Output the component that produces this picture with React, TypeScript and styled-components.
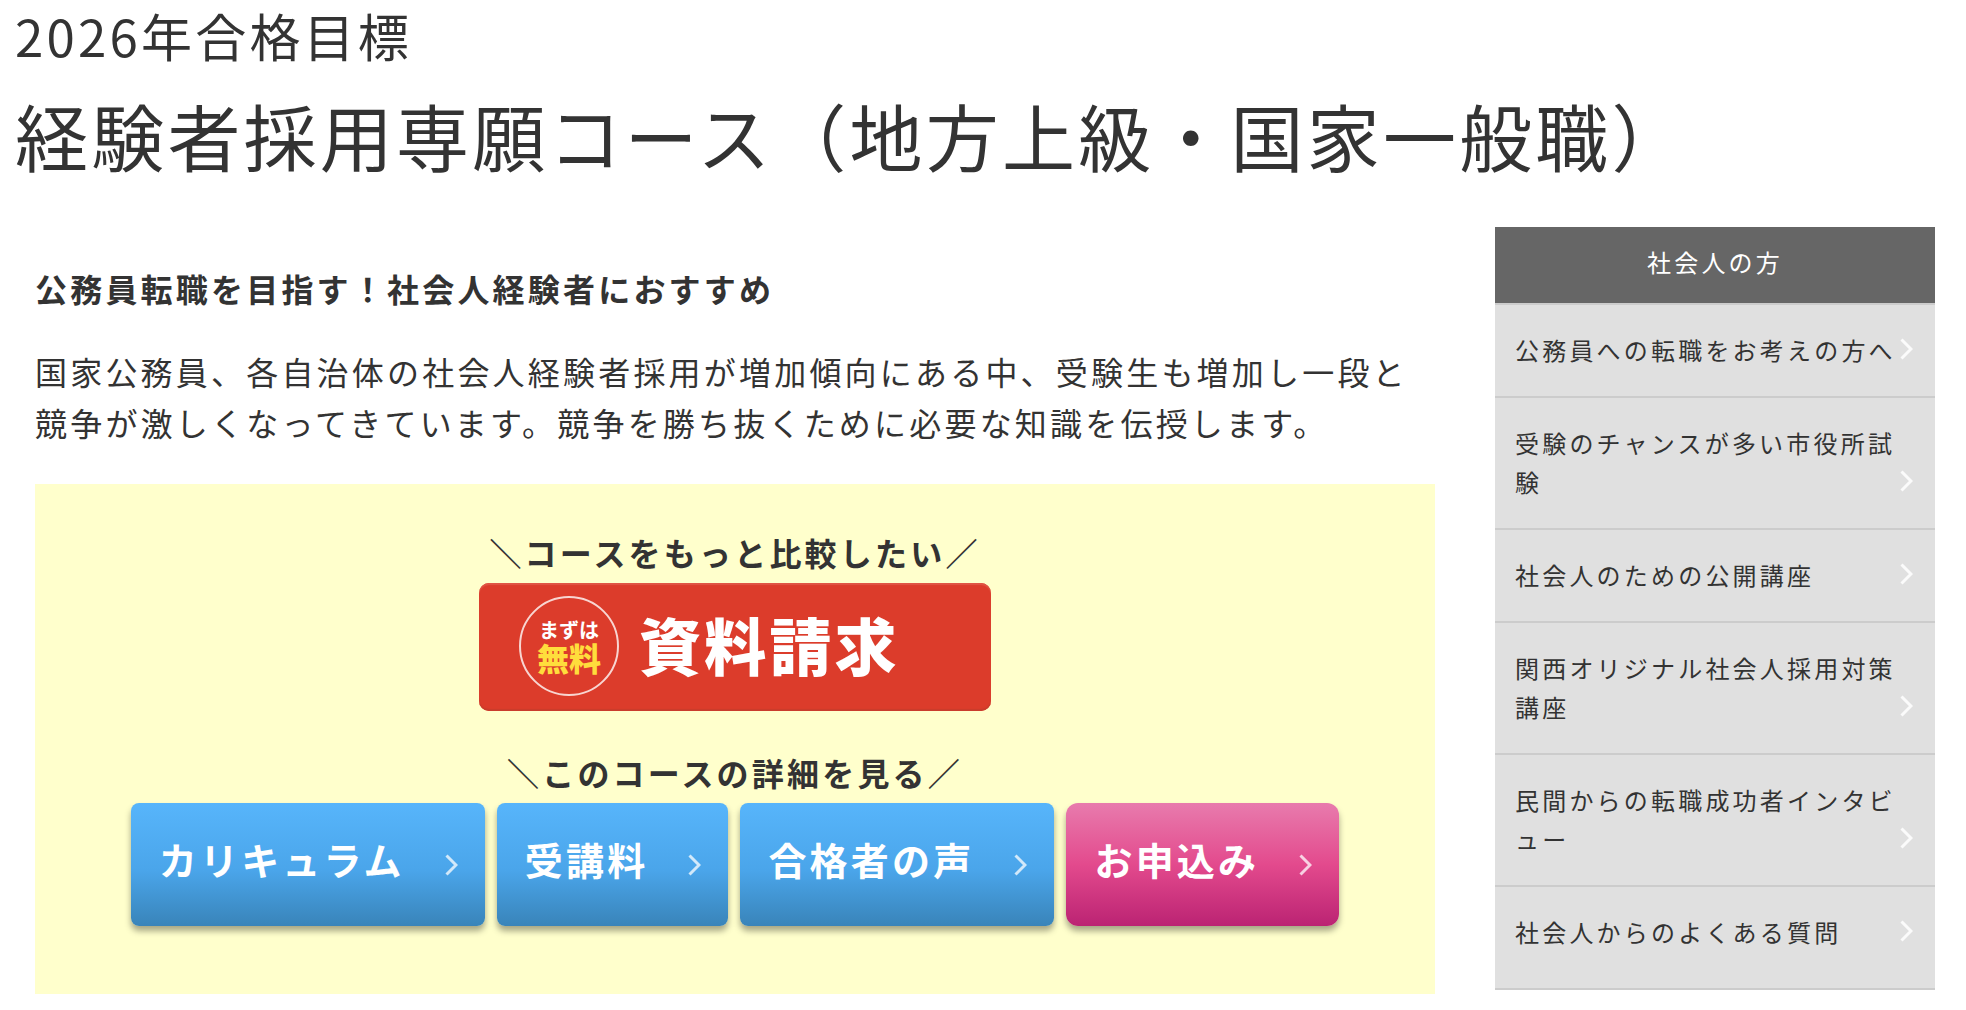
import React from "react";
import styled, { createGlobalStyle, css } from "styled-components";

const GlobalStyle = createGlobalStyle`
  *, *::before, *::after {
    box-sizing: border-box;
  }

  body {
    margin: 0;
    background: #fff;
    color: #333;
    font-family: "Noto Sans CJK JP", sans-serif;
    font-size: 32px;
    line-height: 51px;
    letter-spacing: 0.1em;
  }

  a {
    color: inherit;
    text-decoration: none;
  }
`;

const PageTitle = styled.h1`
  margin: 0;
  padding: 0 15px;
  font-size: 73px;
  font-weight: 400;
  line-height: 96px;
`;

const TitleYear = styled.small`
  display: block;
  margin-bottom: 16px;
  font-size: 51px;
  line-height: 70px;
`;

const Columns = styled.div`
  display: grid;
  grid-template-columns: minmax(0, 1fr) 440px;
  align-items: start;
  gap: 60px;
  padding: 45px 31px 16px 35px;
`;

const Main = styled.main`
  padding-top: 36px;
`;

const LeadHeading = styled.h2`
  margin: 0 0 32px;
  font-size: 32px;
  font-weight: 700;
`;

const LeadText = styled.p`
  margin: 0 0 36px;
`;

const ActionPanel = styled.section`
  display: flex;
  flex-direction: column;
  align-items: center;
  padding: 43px 16px 68px;
  background: #ffffcc;
`;

const ActionCaption = styled.p`
  margin: 0 0 5px;
  font-weight: 700;
`;

const RequestLink = styled.a`
  display: flex;
  align-items: center;
  gap: 20px;
  width: 512px;
  max-width: 100%;
  height: 128px;
  margin-bottom: 36px;
  padding: 0 40px 2px;
  border-radius: 10px;
  background: #dc3c2b;
  box-shadow: inset 0 2px 1px #e05545, inset 0 -2px 1px #c93c2c;
  color: #fff;
`;

const FreeBadge = styled.span`
  display: flex;
  flex: none;
  flex-direction: column;
  align-items: center;
  justify-content: center;
  width: 100px;
  height: 100px;
  border: 2px solid #f8d5d1;
  border-radius: 50%;
  font-size: 20px;
  font-weight: 700;
  line-height: 22px;
  letter-spacing: 0;
`;

const FreeWord = styled.strong`
  color: #ffdd3c;
  font-size: 32px;
  font-weight: 900;
  line-height: 33px;
`;

const RequestLabel = styled.span`
  padding-bottom: 4px;
  font-size: 62px;
  font-weight: 900;
  line-height: 72px;
`;

const DetailNav = styled.nav`
  display: flex;
  flex-wrap: wrap;
  justify-content: center;
  gap: 12px;
`;

const blue = css`
  border-radius: 8px;
  background: linear-gradient(#57b5fb, #4aa5ea 55%, #3984b9);
`;

const pink = css`
  border-radius: 12px;
  background: linear-gradient(#e87bad, #e34a8d 50%, #bb2373);
`;

const DetailLink = styled.a<{ $tone: "blue" | "pink" }>`
  display: flex;
  align-items: center;
  gap: 40px;
  height: 123px;
  padding: 0 27px 0 28px;
  box-shadow: 0 5px 6px rgba(0, 0, 0, 0.35);
  color: #fff;
  font-size: 38px;
  font-weight: 700;
  ${({ $tone }) => ($tone === "pink" ? pink : blue)}
`;

const DetailLabel = styled.span`
  padding-bottom: 12px;
`;

const ChevronSvg = styled.svg`
  flex: none;
  width: 13px;
  height: 22px;
  fill: none;
  stroke: #fff;
  stroke-width: 3;
  opacity: 0.75;
`;

const Sidebar = styled.aside`
  border-bottom: 2px solid #ccc;
  background: #e0e0e0;
  font-size: 24px;
  line-height: 39px;
`;

const SidebarTitle = styled.h2`
  margin: 0;
  padding: 15px 20px 22px;
  background: #666;
  color: #fff;
  font-size: 24px;
  font-weight: 400;
  text-align: center;
`;

const SidebarList = styled.ul`
  margin: 0;
  padding: 0 0 10px;
  list-style: none;
`;

const SidebarItem = styled.li`
  border-top: 2px solid #ccc;
`;

const SidebarLink = styled.a`
  display: block;
  position: relative;
  padding: 25px 20px 27px;

  ${ChevronSvg} {
    position: absolute;
    right: 22px;
    bottom: 36px;
    opacity: 0.9;
  }
`;

const Chevron = () => (
  <ChevronSvg viewBox="0 0 13 22" aria-hidden="true">
    <path d="M1.5 1.5 11 11 1.5 20.5" />
  </ChevronSvg>
);

const details: { label: string; tone: "blue" | "pink" }[] = [
  { label: "カリキュラム", tone: "blue" },
  { label: "受講料", tone: "blue" },
  { label: "合格者の声", tone: "blue" },
  { label: "お申込み", tone: "pink" },
];

const sidebarLinks = [
  "公務員への転職をお考えの方へ",
  "受験のチャンスが多い市役所試験",
  "社会人のための公開講座",
  "関西オリジナル社会人採用対策講座",
  "民間からの転職成功者インタビュー",
  "社会人からのよくある質問",
];

export default function App() {
  return (
    <div lang="ja">
      <GlobalStyle />
      <PageTitle>
        <TitleYear>2026年合格目標</TitleYear>
        経験者採用専願コース（地方上級・国家一般職）
      </PageTitle>
      <Columns>
        <Main>
          <LeadHeading>公務員転職を目指す！社会人経験者におすすめ</LeadHeading>
          <LeadText>
            国家公務員、各自治体の社会人経験者採用が増加傾向にある中、受験生も増加し一段と競争が激しくなってきています。競争を勝ち抜くために必要な知識を伝授します。
          </LeadText>
          <ActionPanel>
            <ActionCaption>＼コースをもっと比較したい／</ActionCaption>
            <RequestLink href="#request">
              <FreeBadge>
                まずは
                <FreeWord>無料</FreeWord>
              </FreeBadge>
              <RequestLabel>資料請求</RequestLabel>
            </RequestLink>
            <ActionCaption>＼このコースの詳細を見る／</ActionCaption>
            <DetailNav>
              {details.map(({ label, tone }) => (
                <DetailLink key={label} href="#detail" $tone={tone}>
                  <DetailLabel>{label}</DetailLabel>
                  <Chevron />
                </DetailLink>
              ))}
            </DetailNav>
          </ActionPanel>
        </Main>
        <Sidebar>
          <SidebarTitle>社会人の方</SidebarTitle>
          <SidebarList>
            {sidebarLinks.map((label) => (
              <SidebarItem key={label}>
                <SidebarLink href="#guide">
                  {label}
                  <Chevron />
                </SidebarLink>
              </SidebarItem>
            ))}
          </SidebarList>
        </Sidebar>
      </Columns>
    </div>
  );
}
